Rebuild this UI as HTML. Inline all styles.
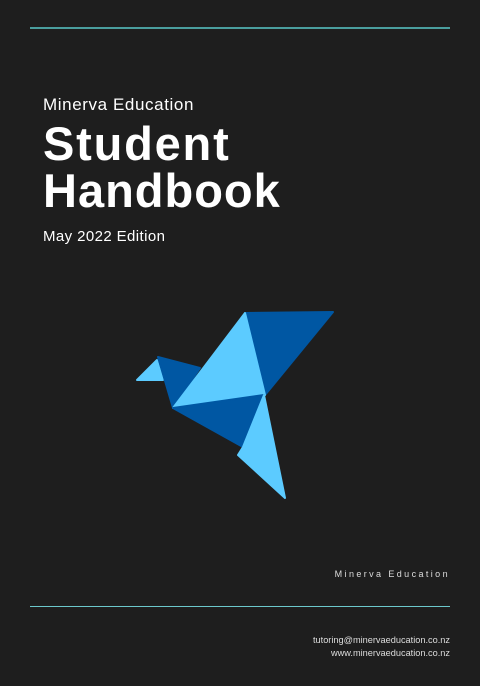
<!DOCTYPE html>
<html><head><meta charset="utf-8"><style>
html,body{margin:0;padding:0}
body{width:480px;height:686px;background:#1e1e1e;position:relative;overflow:hidden;font-family:"Liberation Sans",sans-serif;color:#fff}
.line{position:absolute;left:30px;width:420px;height:2px;background:#4a9e9e}
.t{position:absolute;left:43px;white-space:nowrap;line-height:1}
</style></head><body>
<div class="line" style="top:27px"></div>
<div class="t" style="top:96px;font-size:17px;letter-spacing:0.6px">Minerva Education</div>
<div class="t" style="top:120px;font-size:47px;font-weight:bold;letter-spacing:1.8px">Student</div>
<div class="t" style="top:167px;font-size:47px;font-weight:bold;letter-spacing:1px">Handbook</div>
<div class="t" style="top:229px;font-size:15px;letter-spacing:0.4px">May 2022 Edition</div>
<svg style="position:absolute;left:0;top:0" width="480" height="686">
<g stroke-linejoin="round" stroke-width="2">
<polygon points="137,380 157,360 163,380" fill="#5ccbff" stroke="#5ccbff"/>
<polygon points="158,357 200,368 173,408" fill="#0057a3" stroke="#0057a3"/>
<polygon points="245,313 333,312 265,395" fill="#0057a3" stroke="#0057a3"/>
<polygon points="245,313 265,395 173,408" fill="#5ccbff" stroke="#5ccbff"/>
<polygon points="173,408 264,395 243,447" fill="#0057a3" stroke="#0057a3"/>
<polygon points="264,395 243,447 238,455 285,498" fill="#5ccbff" stroke="#5ccbff"/>
</g>
</svg>
<div style="position:absolute;right:30px;top:569px;font-size:9px;letter-spacing:2.4px;color:#ddd">Minerva Education</div>
<div class="line" style="top:606px;height:1px;background:#6cc8cc"></div>
<div style="position:absolute;right:30px;top:634px;font-size:9.2px;color:#ddd;text-align:right;line-height:13px">tutoring@minervaeducation.co.nz<br>www.minervaeducation.co.nz</div>
</body></html>
